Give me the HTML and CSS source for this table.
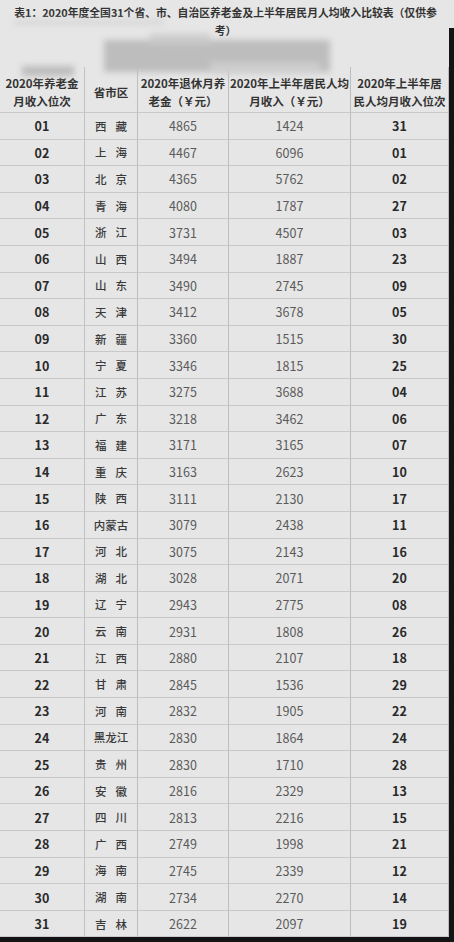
FILE: index.html
```html
<!DOCTYPE html>
<html lang="zh-CN">
<head>
<meta charset="utf-8">
<link rel="stylesheet" href="styles.css">
</head>
<body>
<div class="page">
  <div class="main">
    <div class="title">表1：2020年度全国31个省、市、自治区养老金及上半年居民月人均收入比较表（仅供参<br>考）</div>
    <div class="tbl">
      <div class="h">2020年养老金<br>月收入位次</div>
      <div class="h">省市区</div>
      <div class="h">2020年退休月养<br>老金（￥元）</div>
      <div class="h">2020年上半年居民人均<br>月收入（￥元）</div>
      <div class="h">2020年上半年居<br>民人均月收入位次</div>

      <div class="b">01</div><div class="p"><span class="sp">西藏</span></div><div class="n">4865</div><div class="n">1424</div><div class="b">31</div>
      <div class="b">02</div><div class="p"><span class="sp">上海</span></div><div class="n">4467</div><div class="n">6096</div><div class="b">01</div>
      <div class="b">03</div><div class="p"><span class="sp">北京</span></div><div class="n">4365</div><div class="n">5762</div><div class="b">02</div>
      <div class="b">04</div><div class="p"><span class="sp">青海</span></div><div class="n">4080</div><div class="n">1787</div><div class="b">27</div>
      <div class="b">05</div><div class="p"><span class="sp">浙江</span></div><div class="n">3731</div><div class="n">4507</div><div class="b">03</div>
      <div class="b">06</div><div class="p"><span class="sp">山西</span></div><div class="n">3494</div><div class="n">1887</div><div class="b">23</div>
      <div class="b">07</div><div class="p"><span class="sp">山东</span></div><div class="n">3490</div><div class="n">2745</div><div class="b">09</div>
      <div class="b">08</div><div class="p"><span class="sp">天津</span></div><div class="n">3412</div><div class="n">3678</div><div class="b">05</div>
      <div class="b">09</div><div class="p"><span class="sp">新疆</span></div><div class="n">3360</div><div class="n">1515</div><div class="b">30</div>
      <div class="b">10</div><div class="p"><span class="sp">宁夏</span></div><div class="n">3346</div><div class="n">1815</div><div class="b">25</div>
      <div class="b">11</div><div class="p"><span class="sp">江苏</span></div><div class="n">3275</div><div class="n">3688</div><div class="b">04</div>
      <div class="b">12</div><div class="p"><span class="sp">广东</span></div><div class="n">3218</div><div class="n">3462</div><div class="b">06</div>
      <div class="b">13</div><div class="p"><span class="sp">福建</span></div><div class="n">3171</div><div class="n">3165</div><div class="b">07</div>
      <div class="b">14</div><div class="p"><span class="sp">重庆</span></div><div class="n">3163</div><div class="n">2623</div><div class="b">10</div>
      <div class="b">15</div><div class="p"><span class="sp">陕西</span></div><div class="n">3111</div><div class="n">2130</div><div class="b">17</div>
      <div class="b">16</div><div class="p">内蒙古</div><div class="n">3079</div><div class="n">2438</div><div class="b">11</div>
      <div class="b">17</div><div class="p"><span class="sp">河北</span></div><div class="n">3075</div><div class="n">2143</div><div class="b">16</div>
      <div class="b">18</div><div class="p"><span class="sp">湖北</span></div><div class="n">3028</div><div class="n">2071</div><div class="b">20</div>
      <div class="b">19</div><div class="p"><span class="sp">辽宁</span></div><div class="n">2943</div><div class="n">2775</div><div class="b">08</div>
      <div class="b">20</div><div class="p"><span class="sp">云南</span></div><div class="n">2931</div><div class="n">1808</div><div class="b">26</div>
      <div class="b">21</div><div class="p"><span class="sp">江西</span></div><div class="n">2880</div><div class="n">2107</div><div class="b">18</div>
      <div class="b">22</div><div class="p"><span class="sp">甘肃</span></div><div class="n">2845</div><div class="n">1536</div><div class="b">29</div>
      <div class="b">23</div><div class="p"><span class="sp">河南</span></div><div class="n">2832</div><div class="n">1905</div><div class="b">22</div>
      <div class="b">24</div><div class="p">黑龙江</div><div class="n">2830</div><div class="n">1864</div><div class="b">24</div>
      <div class="b">25</div><div class="p"><span class="sp">贵州</span></div><div class="n">2830</div><div class="n">1710</div><div class="b">28</div>
      <div class="b">26</div><div class="p"><span class="sp">安徽</span></div><div class="n">2816</div><div class="n">2329</div><div class="b">13</div>
      <div class="b">27</div><div class="p"><span class="sp">四川</span></div><div class="n">2813</div><div class="n">2216</div><div class="b">15</div>
      <div class="b">28</div><div class="p"><span class="sp">广西</span></div><div class="n">2749</div><div class="n">1998</div><div class="b">21</div>
      <div class="b">29</div><div class="p"><span class="sp">海南</span></div><div class="n">2745</div><div class="n">2339</div><div class="b">12</div>
      <div class="b">30</div><div class="p"><span class="sp">湖南</span></div><div class="n">2734</div><div class="n">2270</div><div class="b">14</div>
      <div class="b">31</div><div class="p"><span class="sp">吉林</span></div><div class="n">2622</div><div class="n">2097</div><div class="b">19</div>
    </div>
    <div class="bottombar"></div>
  </div>
  <div class="rightbar"></div>
  <div class="blur" aria-hidden="true">
    <div class="smear s1"></div>
    <div class="smear s2"></div>
    <div class="smear s3"></div>
    <div class="smear s4"></div>
    <div class="smear s5"></div>
  </div>
</div>
</body>
</html>
```

FILE: styles.css
```css
html, body {
  margin: 0;
  padding: 0;
  background: #e6e6e6;
}
.page {
  position: relative;
  display: flex;
  width: 454px;
  height: 942px;
  overflow: hidden;
  font-family: "Noto Sans CJK SC", "Noto Sans", sans-serif;
  color: #2e2e2e;
}
.main {
  width: 449px;
  display: flex;
  flex-direction: column;
}
.rightbar {
  width: 5px;
  margin-top: 28px;
  background: #141414;
}
.title {
  height: 67px;
  box-sizing: border-box;
  padding: 3px 4px 0 6px;
  font-size: 10.8px;
  line-height: 18px;
  font-weight: 700;
  text-align: center;
  color: #333;
}
.tbl {
  display: grid;
  grid-template-columns: 85px 53px 91px 122px 98px;
  grid-template-rows: 46px;
  grid-auto-rows: 26.6px;
}
.tbl > div {
  box-sizing: border-box;
  border-right: 1px solid #bdbdbd;
  border-bottom: 1px solid #c9c9c9;
  display: flex;
  align-items: center;
  justify-content: center;
  text-align: center;
}
.tbl > div:nth-child(5n+1) {
  border-right-color: #c2c2c2;
}
.h {
  font-size: 11.5px;
  line-height: 18px;
  font-weight: 700;
  color: #333;
  padding-top: 4px;
}
.b {
  font-size: 12.5px;
  font-weight: 700;
  color: #2a2a2a;
}
.n {
  font-size: 12.5px;
  font-weight: 400;
  color: #5a5a5a;
}
.p {
  font-size: 11.5px;
  font-weight: 500;
  color: #3a3a3a;
}
.sp {
  letter-spacing: 9px;
  margin-right: -9px;
}
.bottombar {
  flex: 1;
  background: #141414;
}
.blur {
  position: absolute;
  left: 0;
  top: 0;
  width: 454px;
  height: 90px;
  filter: blur(3px);
  pointer-events: none;
}
.smear {
  position: absolute;
  background: #c4c4c4;
}
.s1 { left: 14px; top: 20px; width: 150px; height: 5px; background: #d6d6d6; }
.s2 { left: 104px; top: 40px; width: 226px; height: 32px; background: #bdbdbd; }
.s3 { left: 150px; top: 34px; width: 60px; height: 10px; background: #cbcbcb; }
.s4 { left: 22px; top: 66px; width: 52px; height: 10px; background: #bcbcbc; }
.s5 { left: 210px; top: 62px; width: 110px; height: 12px; background: #cdcdcd; }
```
